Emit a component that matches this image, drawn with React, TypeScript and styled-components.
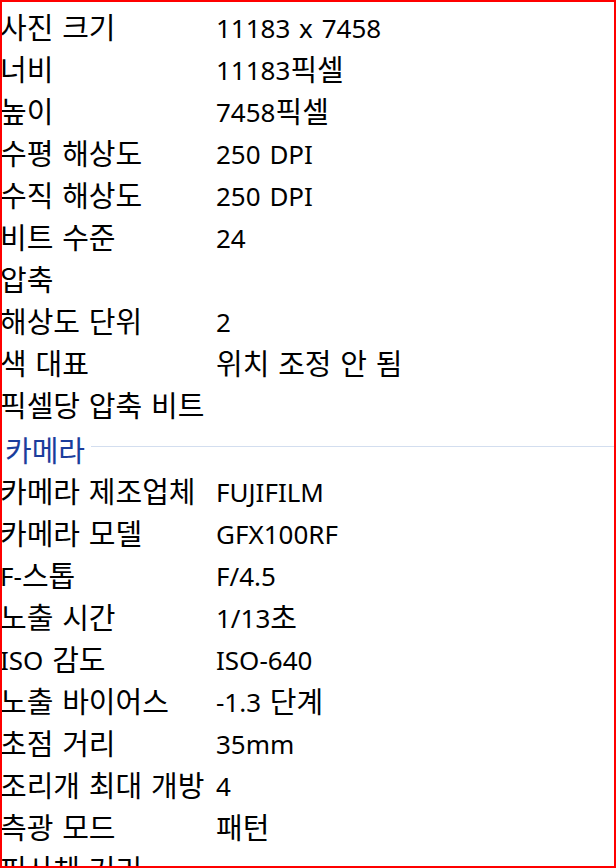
import styled, { createGlobalStyle } from 'styled-components';

const GlobalStyle = createGlobalStyle`
    html, body {
        margin: 0;
        padding: 0;
        background: #ffffff;
    }
`;

const Frame = styled.div`
    position: relative;
    width: 616px;
    height: 868px;
    overflow: hidden;
    background: #ffffff;
    font-family: 'Noto Sans', 'Noto Sans CJK KR', sans-serif;
    font-size: 26px;
    word-spacing: 2px;
    color: #000000;

    &::after {
        content: '';
        position: absolute;
        inset: 0;
        border: 2px solid #ff0000;
        pointer-events: none;
    }
`;

const List = styled.div`
    display: flex;
    flex-direction: column;
    padding-top: 7px;
`;

const Row = styled.div`
    display: grid;
    grid-template-columns: 216px 1fr;
    height: 42px;
    line-height: 42px;
    white-space: nowrap;
`;

const Cell = styled.span`
    overflow: visible;
`;

// Malgun-style hangul runs a bit larger than the latin glyphs
const Hangul = styled.span`
    font-family: 'Noto Sans CJK KR', sans-serif;
    font-size: 29px;
    line-height: 1;
    vertical-align: -1px;
`;

const Group = styled.div`
    display: flex;
    align-items: center;
    gap: 6px;
    height: 44px;
    line-height: 40px;
    padding-left: 5px;
    color: #1b3d9c;
    white-space: nowrap;
`;

const GroupLine = styled.div`
    flex: 1;
    height: 1px;
    margin-bottom: 5px;
    background: #d3deef;
`;

const image: [string, string][] = [
    ['사진 크기', '11183 x 7458'],
    ['너비', '11183픽셀'],
    ['높이', '7458픽셀'],
    ['수평 해상도', '250 DPI'],
    ['수직 해상도', '250 DPI'],
    ['비트 수준', '24'],
    ['압축', ''],
    ['해상도 단위', '2'],
    ['색 대표', '위치 조정 안 됨'],
    ['픽셀당 압축 비트', '']
];

const camera: [string, string][] = [
    ['카메라 제조업체', 'FUJIFILM'],
    ['카메라 모델', 'GFX100RF'],
    ['F-스톱', 'F/4.5'],
    ['노출 시간', '1/13초'],
    ['ISO 감도', 'ISO-640'],
    ['노출 바이어스', '-1.3 단계'],
    ['초점 거리', '35mm'],
    ['조리개 최대 개방', '4'],
    ['측광 모드', '패턴'],
    ['피사체 거리', '']
];

function Text({ children }: { children: string }) {
    const parts = children.split(/([\uAC00-\uD7A3]+)/).filter(Boolean);
    return (
        <>
            {parts.map((p, i) =>
                /[\uAC00-\uD7A3]/.test(p) ? <Hangul key={i}>{p}</Hangul> : p
            )}
        </>
    );
}

function Rows({ items }: { items: [string, string][] }) {
    return (
        <>
            {items.map(([label, value]) => (
                <Row key={label}>
                    <Cell>
                        <Text>{label}</Text>
                    </Cell>
                    <Cell>
                        <Text>{value}</Text>
                    </Cell>
                </Row>
            ))}
        </>
    );
}

export default function App() {
    return (
        <>
            <GlobalStyle />
            <Frame>
                <List>
                    <Rows items={image} />
                    <Group>
                        <Text>카메라</Text>
                        <GroupLine />
                    </Group>
                    <Rows items={camera} />
                </List>
            </Frame>
        </>
    );
}
